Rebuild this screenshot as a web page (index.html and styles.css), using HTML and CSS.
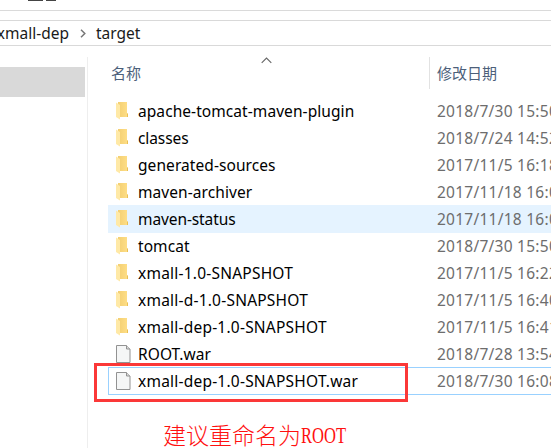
FILE: index.html
```html
<!DOCTYPE html>
<html lang="zh-CN">
<head>
<meta charset="utf-8">
<title>target</title>
<link rel="stylesheet" href="styles.css">
</head>
<body>
<svg class="defs" width="0" height="0" aria-hidden="true">
  <defs>
    <linearGradient id="gold" x1="0" x2="1"><stop offset="0" stop-color="#f3cf72"/><stop offset="1" stop-color="#ffdf88"/></linearGradient>
    <symbol id="folder" viewBox="0 0 16 18">
      <path d="M2 0h9v11.500h1V15H2z" fill="url(#gold)"/>
      <path d="M11 11.500h1V15h-1z" fill="#e9bf55"/>
      <path d="M0 .5 4 3v14.500L0 15z" fill="#ffe9a6"/>
    </symbol>
    <symbol id="file" viewBox="0 0 16 18">
      <path d="M.5.500h10l3.500 3.500v13.500H.500z" fill="#f5f6f6" stroke="#929292"/>
      <path d="M10.500.500V4H14" fill="#d9d9d9" stroke="#929292"/>
    </symbol>
  </defs>
</svg>
<div class="window">
  <div class="ribbon"><i class="mark mark-a"></i><i class="mark mark-b"></i></div>
  <nav class="address">
    <span class="crumb parent">xmall-dep</span>
    <svg class="chevron" width="6" height="9" viewBox="0 0 6 9"><path d="M1 .7 4.800 4.500 1 8.300" fill="none" stroke="#777" stroke-width="1.500"/></svg>
    <span class="crumb current">target</span>
  </nav>
  <div class="content">
    <aside class="tree"><div class="tree-item"></div></aside>
    <main class="list">
      <header class="columns">
        <span class="col-name">名称</span>
        <svg class="sort" width="11" height="7" viewBox="0 0 11 7"><path d="M.7 5.800 5.500 1l4.800 4.800" fill="none" stroke="#666" stroke-width="1.100"/></svg>
        <span class="col-date">修改日期</span>
      </header>
      <div class="row"><svg class="icon"><use href="#folder"/></svg><span class="name">apache-tomcat-maven-plugin</span><span class="date">2018/7/30 15:50</span></div>
      <div class="row"><svg class="icon"><use href="#folder"/></svg><span class="name short">classes</span><span class="date">2018/7/24 14:52</span></div>
      <div class="row"><svg class="icon"><use href="#folder"/></svg><span class="name">generated-sources</span><span class="date">2017/11/5 16:18</span></div>
      <div class="row"><svg class="icon"><use href="#folder"/></svg><span class="name">maven-archiver</span><span class="date">2017/11/18 16:08</span></div>
      <div class="row hover"><svg class="icon"><use href="#folder"/></svg><span class="name short">maven-status</span><span class="date">2017/11/18 16:08</span></div>
      <div class="row"><svg class="icon"><use href="#folder"/></svg><span class="name">tomcat</span><span class="date">2018/7/30 15:50</span></div>
      <div class="row"><svg class="icon"><use href="#folder"/></svg><span class="name caps">xmall-1.0-SNAPSHOT</span><span class="date">2017/11/5 16:22</span></div>
      <div class="row"><svg class="icon"><use href="#folder"/></svg><span class="name caps">xmall-d-1.0-SNAPSHOT</span><span class="date">2017/11/5 16:40</span></div>
      <div class="row"><svg class="icon"><use href="#folder"/></svg><span class="name caps">xmall-dep-1.0-SNAPSHOT</span><span class="date">2017/11/5 16:41</span></div>
      <div class="row"><svg class="icon"><use href="#file"/></svg><span class="name">ROOT.war</span><span class="date">2018/7/28 13:54</span></div>
      <div class="row focused"><svg class="icon"><use href="#file"/></svg><span class="name caps">xmall-dep-1.0-SNAPSHOT.war</span><span class="date">2018/7/30 16:08</span></div>
    </main>
  </div>
  <div class="callout"></div>
  <div class="note">建议重命名为<span class="latin">ROOT</span></div>
</div>
</body>
</html>
```
FILE: styles.css
```css
* { box-sizing: border-box; }
body { margin: 0; background: #fff; overflow: hidden; }
.defs { position: absolute; }
.window {
  position: relative;
  width: 551px;
  height: 448px;
  overflow: hidden;
  background: #fff;
  font: 15.5px/27px "Noto Sans", "Noto Sans CJK SC", sans-serif;
  color: #000;
}
.ribbon { display: flex; gap: 3px; height: 11px; padding-left: 28px; border-bottom: 1px solid #dadada; }
.mark { height: 1px; background: #444; }
.mark-a { width: 15px; }
.mark-b { width: 10px; }
.address {
  display: flex;
  align-items: center;
  height: 26px;
  margin-top: 9px;
  border: solid #d9d9d9;
  border-width: 1px 0;
  color: #1a1a1a;
  line-height: 24px;
  white-space: nowrap;
}
.parent { width: 69px; display: flex; justify-content: flex-end; }
.chevron { margin: 0 10px 0 11px; }
.content { display: flex; height: 402px; }
.tree { width: 87px; padding-top: 21px; }
.tree-item { width: 85px; height: 30px; background: #d9d9d9; }
.list { flex: 1; min-width: 0; margin-top: 11px; padding-left: 20px; border-left: 1px solid #eee; }
.columns {
  display: flex;
  height: 32px;
  margin-bottom: 8px;
  padding-left: 3px;
  font-family: "Noto Sans CJK SC", sans-serif;
  font-size: 15px;
  line-height: 31px;
  color: #4c607a;
}
.col-name { width: 150px; }
.sort { flex: none; }
.col-date { margin-left: 157px; padding-left: 7px; border-left: 1px solid #e2e2e2; white-space: nowrap; }
.row { display: flex; height: 27px; padding-left: 8px; white-space: nowrap; line-height: 29px; }
.icon { flex: none; width: 16px; height: 18px; margin-top: 5px; }
.name { flex: none; width: 305px; padding-left: 6px; letter-spacing: .07px; }
.name.short { letter-spacing: -.1px; }
.name.caps { letter-spacing: .22px; }
.date { flex: none; color: #6d6d6d; letter-spacing: .25px; }
.hover { background: #e5f3ff; box-shadow: 0 1px #e5f3ff; }
.focused { height: 28px; margin-right: -2px; box-shadow: inset 0 0 0 1px #99d1ff; }
.callout { position: absolute; left: 94px; top: 363px; width: 314px; height: 39px; border: 3px solid #fb3838; }
.note {
  position: absolute;
  left: 163px;
  top: 418px;
  display: flex;
  width: 190px;
  height: 30px;
  font: 300 23px/32px "Noto Sans CJK SC", sans-serif;
  color: #ff1010;
  white-space: nowrap;
}
.latin { width: 46px; padding-top: 2px; font-family: "Liberation Serif", serif; transform: scaleX(.72); transform-origin: 0 50%; }
```
